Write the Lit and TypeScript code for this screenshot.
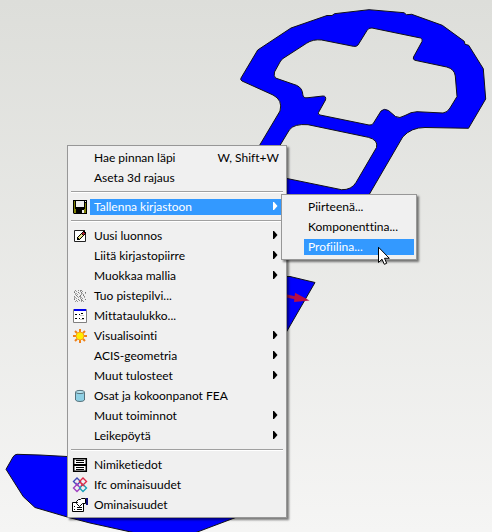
import { LitElement, html, svg, css, nothing, type SVGTemplateResult } from "lit";
import { customElement } from "lit/decorators.js";
import { classMap } from "lit/directives/class-map.js";

interface Item {
  label: string;
  icon?: string;
  keys?: string;
  more?: boolean;
  active?: boolean;
  children?: Item[];
}

const groups: Item[][] = [
  [
    { label: "Hae pinnan läpi", keys: "W, Shift+W" },
    { label: "Aseta 3d rajaus" },
  ],
  [
    {
      label: "Tallenna kirjastoon",
      icon: "save",
      more: true,
      active: true,
      children: [
        { label: "Piirteenä..." },
        { label: "Komponenttina..." },
        { label: "Profiilina...", active: true },
      ],
    },
  ],
  [
    { label: "Uusi luonnos", icon: "sketch", more: true },
    { label: "Liitä kirjastopiirre", more: true },
    { label: "Muokkaa mallia", more: true },
    { label: "Tuo pistepilvi...", icon: "cloud" },
    { label: "Mittataulukko...", icon: "table" },
    { label: "Visualisointi", icon: "sun", more: true },
    { label: "ACIS-geometria", more: true },
    { label: "Muut tulosteet", more: true },
    { label: "Osat ja kokoonpanot FEA", icon: "cylinder" },
    { label: "Muut toiminnot", more: true },
    { label: "Leikepöytä", more: true },
  ],
  [
    { label: "Nimiketiedot", icon: "records" },
    { label: "Ifc ominaisuudet", icon: "ifc" },
    { label: "Ominaisuudet", icon: "props" },
  ],
];

const icons: Record<string, SVGTemplateResult> = {
  save: svg`
    <path fill="#000" d="M1 1h14v14H2l-1-1z"/>
    <path fill="#808000" d="M2 2h1v8h10V4h1v10h-2v-4H4v4H2z"/>
    <path fill="#efefef" d="M4 2h8v6H4zM13 2h1v1h-1zM10 11h2v3h-2z"/>`,
  sketch: svg`
    <path fill="#fff" stroke="#222" d="M2.500 2.500h11v11h-11z"/>
    <path fill="#efefef" d="M13 2h2v3h-2z"/>
    <path fill="#000" d="M11 3h2v1h1v2h-1v1h-1v1h-1v1h-1v1H9v1H8v1H5V9h1V8h1V7h1V6h1V5h1V4h1z"/>
    <path fill="#e8e08a" d="M9 6h1v1h1v1h-1v1H9v1H8v1H7v-1H6V9h1V8h1V7h1z"/>
    <path fill="#b02030" d="M11 4h1v1h1v1h-1v1h-1V6h-1V5h1z"/>`,
  cloud: svg`
    <path stroke="#8a8a8a" stroke-dasharray="1 2 1 1 2 3" d="M3 2.500h10M2 8.500h12M4 12.500h10"/>
    <path stroke="#999" stroke-dasharray="1 1 1 3" d="M2 3.500h12M3 6.500h11M2 10.500h12M3 13.500h10"/>
    <path stroke="#777" stroke-dasharray="1 3 1 2" d="M2 4.500h12M4 7.500h10M2 11.500h12"/>
    <path stroke="#aaa" stroke-dasharray="2 2 1 1" d="M3 5.500h11M2 9.500h12"/>`,
  table: svg`
    <path fill="#fff" stroke="#808080" d="M1.500 1.500h13v13h-13z"/>
    <path fill="#0000f0" d="M2 1h12v2H2z"/>
    <path fill="#000" d="M3 6h2v1H3zM3 10h2v1H3zM7 6h1v1H7zM9 5h2v1H9zM7 10h1v1H7zM10 10h2v1h-2z"/>
    <path fill="#ccc" d="M8 7h4v1H8zM8 11h4v1H8z"/>`,
  sun: svg`
    <path stroke="#f08018" stroke-width="2" d="M8 1v3M8 12v3M1 8h3M12 8h3M3 3l2 2M11 11l2 2M3 13l2-2M11 5l2-2"/>
    <circle cx="8" cy="8" r="4" fill="#ffee00" stroke="#f5a020"/>`,
  cylinder: svg`
    <path fill="#8fd0e4" stroke="#56727c" d="M3.500 4v8q1 1.500 4.500 1.500t4.500-1.500V4"/>
    <ellipse cx="8" cy="4" rx="4.500" ry="1.600" fill="#b8e4f0" stroke="#56727c"/>`,
  records: svg`
    <path fill="#fff" stroke="#000" stroke-width="1.500" d="M1.700 1.700h12.600v12.600H1.700z"/>
    <path stroke="#000" d="M4 3.500h8M4 5.500h8M4 10.500h8M4 12.500h8"/>
    <path stroke="#000" stroke-width="2" d="M2 8h12"/>`,
  ifc: svg`
    <g stroke-width="1.400">
      <path stroke="#4048b8" d="M5 1l3.500 3.500L5 8 1.500 4.500z"/>
      <path stroke="#e02848" d="M11 1l3.500 3.500L11 8 7.500 4.500z"/>
      <path stroke="#a040c0" d="M5 7.500L8.500 11 5 14.500 1.500 11z"/>
      <path stroke="#18a0b8" d="M11 7.500l3.500 3.500-3.500 3.500L7.500 11z"/>
      <path stroke="#e02848" d="M9 6l3 3M9 9l2-2"/>
      <path stroke="#a040c0" d="M4 6l2.500 3"/>
    </g>`,
  props: svg`
    <path fill="#fff" stroke="#000" d="M.5 5.500h11v9H.5z"/>
    <path fill="#fff" stroke="#000" d="M4.500 4.500l2-2h2l1-1h4v5h-3l-3 3-3-3 1-1z"/>
    <path fill="#101080" d="M14 1h2v7h-2z"/>
    <path stroke="#000" d="M2 9.500h1M5 10.500h5M2 12.500h1M5 12.500h5"/>`,
};

@customElement("model-view")
export class ModelView extends LitElement {
  static styles = css`
    :host {
      display: block;
    }
    .drawing {
      display: block;
      width: 100%;
      height: 100%;
    }
    .part {
      fill: #0000fe;
      stroke: #101018;
      stroke-width: 1;
      fill-rule: evenodd;
    }
    .shaft {
      stroke: #a8104c;
      stroke-width: 3;
    }
    .head {
      fill: #b80c44;
    }
  `;

  render() {
    return html`
      <svg class="drawing" viewBox="0 0 492 532" preserveAspectRatio="xMinYMin meet" aria-hidden="true">
        <path
          class="part"
          d="M241 78L257.700 50 291 28 327 15.500 332 15.500 334.500 13.700 369 9.700 404 12.700 406.500 14.700 411.700 14.300
             442.300 25.300 464.300 41.300 465 44.300 468.700 45.300 483.300 68.700 485.700 99 468.500 128.300 425 127.500
             Q411 127.500 402.700 137L366 200H227L280 111Q283 100 273 95L242 81Q240 80 241 78Z
             M275.500 78Q273.500 76 274.500 72L280 62Q281 60 283 58.500L306.500 43.300Q313 39 321.700 40L353.300 46.300
             Q356.500 47 358 45L367 30.500Q368.500 27.500 372 28L420.500 38Q423 39 422 41.500L413.500 57Q412.500 59.500 415 60.300
             L446.700 67Q454.500 69 455.300 76L457 96.500 450 108Q447.500 112.500 443 113L417 111.700Q411 111.800 405 115.500
             Q399.500 119 395.500 116.500L388.500 110.500Q384 108 381 111L373.500 123Q372.500 125.500 369 125L320 115
             Q317.500 114.300 318.500 112.500L325.500 100Q326.500 96 323 96L308 97.700Q303 98.500 302.800 94.500Q302.500 88 296.500 85.300Z
             M273 157L289.300 130Q294 123.500 308 124.700L368.300 137.300Q378.500 140 376.500 147.500L356 182.500
             Q351.500 190 341.500 189.700L270 175Z"
        />
        <path class="part" d="M250 270L287 276.500 290 276.500 315 282.500 287 331 250 390Z" />
        <path
          class="part"
          d="M6 469.300L13 457Q14.500 454.500 17 454.300L40 455 67 456.500 250 465V512L233 518.500 192 534
             H140L90 523 68.300 517.300 35 507.500 23.300 496.700Z"
        />
        <path class="shaft" d="M280 294.500L296 298" />
        <path class="head" d="M295 292.700L309.500 300.500 294 302Z" />
      </svg>
    `;
  }
}

@customElement("context-menu")
export class ContextMenu extends LitElement {
  static properties = { groups: { attribute: false } };
  declare groups: Item[][];

  static styles = css`
    :host {
      display: block;
      box-sizing: border-box;
      padding: 2px;
      border: 1px solid #979797;
      background: #f0f0f0;
      box-shadow: 2px 2px 2px rgba(0, 0, 0, 0.5);
      font: 12px/16px "Segoe UI", Lato, "Open Sans", sans-serif;
      font-variant-ligatures: none;
      color: #000;
    }
    .rule {
      height: 1px;
      margin: 3px 1px 4px;
      border: 0;
      border-top: 1px solid #a0a0a0;
      background: #fff;
    }
    .row {
      position: relative;
      display: grid;
      grid-template-columns: 20px 1fr;
      height: 20px;
    }
    .icon {
      width: 16px;
      height: 16px;
      margin: 2px;
      fill: none;
    }
    .item {
      grid-column: 2;
      display: flex;
      align-items: center;
      justify-content: space-between;
      height: 16px;
      margin: 2px 0;
      padding: 0 5px 0 4px;
      border: 0;
      background: none;
      color: inherit;
      font: inherit;
      font-variant-ligatures: none;
      text-align: left;
      white-space: nowrap;
    }
    .active {
      background: #3399ff;
      color: #fff;
    }
    .more {
      width: 5px;
      height: 8px;
      margin: 0 1px 2px;
      fill: currentColor;
    }
    .sub {
      position: absolute;
      top: -3px;
      left: 211px;
      z-index: 1;
      width: 136px;
    }
  `;

  private row(item: Item) {
    return html`
      <div class="row">
        ${item.icon
          ? html`<svg class="icon" viewBox="0 0 16 16" aria-hidden="true">${icons[item.icon]}</svg>`
          : nothing}
        <button
          class=${classMap({ item: true, active: !!item.active })}
          role="menuitem"
          aria-haspopup=${item.more ? "menu" : nothing}
        >
          <span>${item.label}</span>
          ${item.keys ? html`<span>${item.keys}</span>` : nothing}
          ${item.more
            ? html`<svg class="more" viewBox="0 0 5 8" aria-hidden="true"><path d="M0 0h1l3.500 4L1 8H0z" /></svg>`
            : nothing}
        </button>
        ${item.children
          ? html`<context-menu class="sub" role="menu" .groups=${[item.children]}></context-menu>`
          : nothing}
      </div>
    `;
  }

  render() {
    return this.groups.map(
      (group, i) => html`${i ? html`<hr class="rule" />` : nothing}${group.map((item) => this.row(item))}`,
    );
  }
}

@customElement("app-root")
export class AppRoot extends LitElement {
  static styles = css`
    :host {
      position: relative;
      display: grid;
      min-height: 100vh;
      overflow: hidden;
      background: linear-gradient(#dddeda, #f5f5f4);
    }
    .menu {
      position: absolute;
      top: 145px;
      left: 67px;
      width: 220px;
    }
    .cursor {
      position: absolute;
      top: 246px;
      left: 378px;
      z-index: 2;
      width: 12px;
      height: 19px;
    }
  `;

  render() {
    return html`
      <model-view></model-view>
      <context-menu class="menu" role="menu" .groups=${groups}></context-menu>
      <svg class="cursor" viewBox="0 0 12 19" aria-hidden="true">
        <path
          fill="#fff"
          stroke="#000"
          d="M.5 1.200V16.500L4 13.200 6.300 18.300 8.700 17.300 6.500 12.300H11.300Z"
        />
      </svg>
    `;
  }
}
